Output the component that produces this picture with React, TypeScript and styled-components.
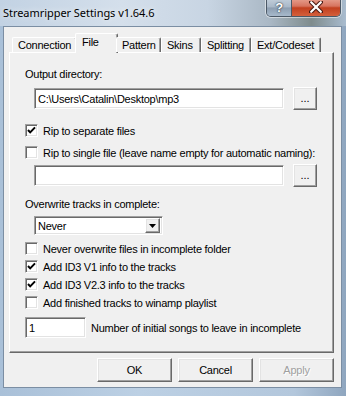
import React from "react";
import styled, { createGlobalStyle } from "styled-components";

const GlobalStyle = createGlobalStyle`
  html, body {
    margin: 0;
    padding: 0;
    background: #b7cbe0;
  }
  * {
    box-sizing: border-box;
  }
`;

const tabs = [
  { label: "Connection", w: 65 },
  { label: "File", w: 43 },
  { label: "Pattern", w: 45 },
  { label: "Skins", w: 40 },
  { label: "Splitting", w: 50 },
  { label: "Ext/Codeset", w: 70 },
];

const checks = [
  { label: "Never overwrite files in incomplete folder", on: false },
  { label: "Add ID3 V1 info to the tracks", on: true },
  { label: "Add ID3 V2.3 info to the tracks", on: true },
  { label: "Add finished tracks to winamp playlist", on: false },
];

const CheckBox: React.FC<{ label: string; checked?: boolean; top: number }> = ({
  label,
  checked,
  top,
}) => (
  <CheckRow $top={top}>
    <Box>
      {checked && (
        <svg width="11" height="11" viewBox="0 0 11 11">
          <path d="M2 5 L4.2 7.4 L9 2.4" fill="none" stroke="#000" strokeWidth="2" />
        </svg>
      )}
    </Box>
    <span>{label}</span>
  </CheckRow>
);

const App: React.FC = () => {
  return (
    <>
      <GlobalStyle />
      <Window>
        <TitleBar>
          <Title>Streamripper Settings v1.64.6</Title>
          <CaptionButtons>
            <HelpButton>?</HelpButton>
            <CloseButton>
              <svg width="14" height="12" viewBox="0 0 14 12">
                <path d="M2 1 L12 11 M12 1 L2 11" stroke="#4a1a12" strokeWidth="4.2" strokeLinecap="round" />
                <path d="M2.2 1.2 L11.8 10.8 M11.8 1.2 L2.2 10.8" stroke="#fff" strokeWidth="2.2" strokeLinecap="round" />
              </svg>
            </CloseButton>
          </CaptionButtons>
        </TitleBar>

        <Client>
          <TabStrip>
            {tabs.map((t) => (
              <Tab key={t.label} $w={t.w} $active={t.label === "File"}>
                {t.label}
              </Tab>
            ))}
          </TabStrip>

          <Panel>
            <Label $top={14}>Output directory:</Label>
            <PathRow $top={6}>
              <TextField>C:\Users\Catalin\Desktop\mp3</TextField>
              <SmallButton>...</SmallButton>
            </PathRow>

            <CheckBox top={13} checked label="Rip to separate files" />
            <CheckBox top={7} label="Rip to single file (leave name empty for automatic naming):" />

            <PathRow $top={4}>
              <TextField />
              <SmallButton>...</SmallButton>
            </PathRow>

            <Label $top={10}>Overwrite tracks in complete:</Label>
            <Combo>
              <span>Never</span>
              <ComboArrow>
                <svg width="7" height="4" viewBox="0 0 7 4">
                  <path d="M0 0 H7 L3.5 4 Z" fill="#000" />
                </svg>
              </ComboArrow>
            </Combo>

            <CheckList>
              {checks.map((c) => (
                <CheckBox key={c.label} top={0} checked={c.on} label={c.label} />
              ))}
            </CheckList>

            <NumberRow>
              <NumberField>1</NumberField>
              <span>Number of initial songs to leave in incomplete</span>
            </NumberRow>
          </Panel>

          <ButtonRow>
            <DialogButton>OK</DialogButton>
            <DialogButton>Cancel</DialogButton>
            <DialogButton $disabled>Apply</DialogButton>
          </ButtonRow>
        </Client>
      </Window>
    </>
  );
};

const Window = styled.div`
  width: 346px;
  height: 396px;
  display: flex;
  flex-direction: column;
  padding: 0 4px 8px 3px;
  background: linear-gradient(to right, #a9c0d8 0%, #bcd0e4 40%, #b3c7dc 85%, #8fa6bf 100%);
  font-family: "Liberation Sans", Arial, sans-serif;
  font-size: 11px;
  letter-spacing: -0.25px;
  color: #000;
  overflow: hidden;
`;

const TitleBar = styled.div`
  height: 26px;
  margin: 0 -4px 0 -3px;
  padding: 0 5px 0 3px;
  display: flex;
  align-items: flex-start;
  justify-content: space-between;
  background: linear-gradient(
    to right,
    #c2d2e3 0%,
    #d4dfeb 35%,
    #c8d5e3 60%,
    #aab8c5 78%,
    #7f8c8d 90%,
    #a9bccf 100%
  );
`;

const Title = styled.div`
  font-family: "Noto Sans", "Open Sans", sans-serif;
  font-size: 11px;
  letter-spacing: -0.05px;
  color: #000;
  padding-top: 5px;
  text-shadow: 0 0 6px rgba(255, 255, 255, 0.9);
`;

const CaptionButtons = styled.div`
  display: flex;
  margin-top: -2px;
  height: 19px;
  border: 1px solid #4b5866;
  border-top: none;
  border-radius: 0 0 5px 5px;
  overflow: hidden;
  box-shadow: 0 0 0 1px rgba(255, 255, 255, 0.5);
`;

const HelpButton = styled.div`
  width: 25px;
  display: flex;
  align-items: center;
  justify-content: center;
  background: linear-gradient(to bottom, #c4d0dc 0%, #a9b8c8 50%, #8d9eb1 55%, #a7b9cb 100%);
  border-right: 1px solid #4b5866;
  font-family: "Liberation Sans", Arial, sans-serif;
  font-weight: bold;
  font-size: 13px;
  color: #fff;
  text-shadow: 0 0 1px #2a3542, 0 0 2px #2a3542;
`;

const CloseButton = styled.div`
  width: 48px;
  display: flex;
  align-items: center;
  justify-content: center;
  background: linear-gradient(to bottom, #e8a493 0%, #d7745f 45%, #c2401f 55%, #d4603c 100%);
`;

const Client = styled.div`
  flex: 1;
  display: flex;
  flex-direction: column;
  background: #f0f0f0;
  border: 1px solid #7b8ea3;
  padding: 6px 7px 0 5px;
`;

const TabStrip = styled.div`
  display: flex;
  align-items: flex-end;
  height: 19px;
  padding-left: 3px;
  position: relative;
  z-index: 1;
`;

const Tab = styled.div<{ $w: number; $active?: boolean }>`
  width: ${(p) => p.$w}px;
  height: ${(p) => (p.$active ? 20 : 15)}px;
  margin-bottom: ${(p) => (p.$active ? -1 : 0)}px;
  margin-left: ${(p) => (p.$active ? -2 : 0)}px;
  margin-right: ${(p) => (p.$active ? -2 : 0)}px;
  padding: ${(p) => (p.$active ? "2px 0 0 6px" : "1px 0 0 5px")};
  background: #f0f0f0;
  border-top: 1px solid #fff;
  border-left: 1px solid #fff;
  border-right: 1px solid #696969;
  box-shadow: inset -1px 0 0 #a0a0a0;
  border-radius: 2px 2px 0 0;
  white-space: nowrap;
  line-height: 13px;
`;

const Panel = styled.div`
  height: 301px;
  display: flex;
  flex-direction: column;
  align-items: flex-start;
  padding-left: 15px;
  border-top: 1px solid #fff;
  border-left: 1px solid #fff;
  border-right: 1px solid #696969;
  border-bottom: 1px solid #696969;
  box-shadow: inset -1px -1px 0 #a0a0a0;
`;

const Label = styled.div<{ $top: number }>`
  margin-top: ${(p) => p.$top}px;
  line-height: 14px;
  white-space: nowrap;
`;

const PathRow = styled.div<{ $top: number }>`
  margin-top: ${(p) => p.$top}px;
  margin-left: 9px;
  display: flex;
  align-items: center;
  gap: 9px;
  height: 23px;
`;

const sunken = `
  background: #fff;
  border-top: 1px solid #a0a0a0;
  border-left: 1px solid #a0a0a0;
  border-right: 1px solid #fff;
  border-bottom: 1px solid #fff;
  box-shadow: inset 1px 1px 0 #696969, inset -1px -1px 0 #e3e3e3;
`;

const TextField = styled.div`
  ${sunken}
  width: 250px;
  height: 21px;
  padding: 3px 0 0 3px;
  line-height: 14px;
  white-space: nowrap;
`;

const raised = `
  background: #f0f0f0;
  border-top: 1px solid #fff;
  border-left: 1px solid #fff;
  border-right: 1px solid #696969;
  border-bottom: 1px solid #696969;
  box-shadow: inset -1px -1px 0 #a0a0a0, inset 1px 1px 0 #e3e3e3;
`;

const SmallButton = styled.div`
  ${raised}
  width: 24px;
  height: 23px;
  display: flex;
  align-items: center;
  justify-content: center;
  padding-bottom: 1px;
  letter-spacing: 0;
`;

const CheckRow = styled.div<{ $top: number }>`
  margin-top: ${(p) => p.$top}px;
  height: 15px;
  display: flex;
  align-items: center;
  gap: 5px;
  white-space: nowrap;
`;

const Box = styled.div`
  ${sunken}
  width: 13px;
  height: 13px;
  display: flex;
  align-items: center;
  justify-content: center;
`;

const Combo = styled.div`
  ${sunken}
  margin-top: 5px;
  margin-left: 9px;
  width: 129px;
  height: 19px;
  display: flex;
  align-items: center;
  justify-content: space-between;
  padding: 0 2px 0 3px;
`;

const ComboArrow = styled.div`
  ${raised}
  width: 15px;
  height: 15px;
  display: flex;
  align-items: center;
  justify-content: center;
`;

const CheckList = styled.div`
  margin-top: 6px;
  display: flex;
  flex-direction: column;
  gap: 3px;
`;

const NumberRow = styled.div`
  margin-top: 7px;
  display: flex;
  align-items: center;
  gap: 5px;
  white-space: nowrap;
`;

const NumberField = styled(TextField)`
  width: 61px;
`;

const ButtonRow = styled.div`
  display: flex;
  justify-content: flex-end;
  gap: 6px;
  margin-top: 5px;
`;

const DialogButton = styled.div<{ $disabled?: boolean }>`
  ${raised}
  width: 75px;
  height: 24px;
  display: flex;
  align-items: center;
  justify-content: center;
  color: ${(p) => (p.$disabled ? "#a0a0a0" : "#000")};
  text-shadow: ${(p) => (p.$disabled ? "1px 1px 0 #fff" : "none")};
`;

export default App;
